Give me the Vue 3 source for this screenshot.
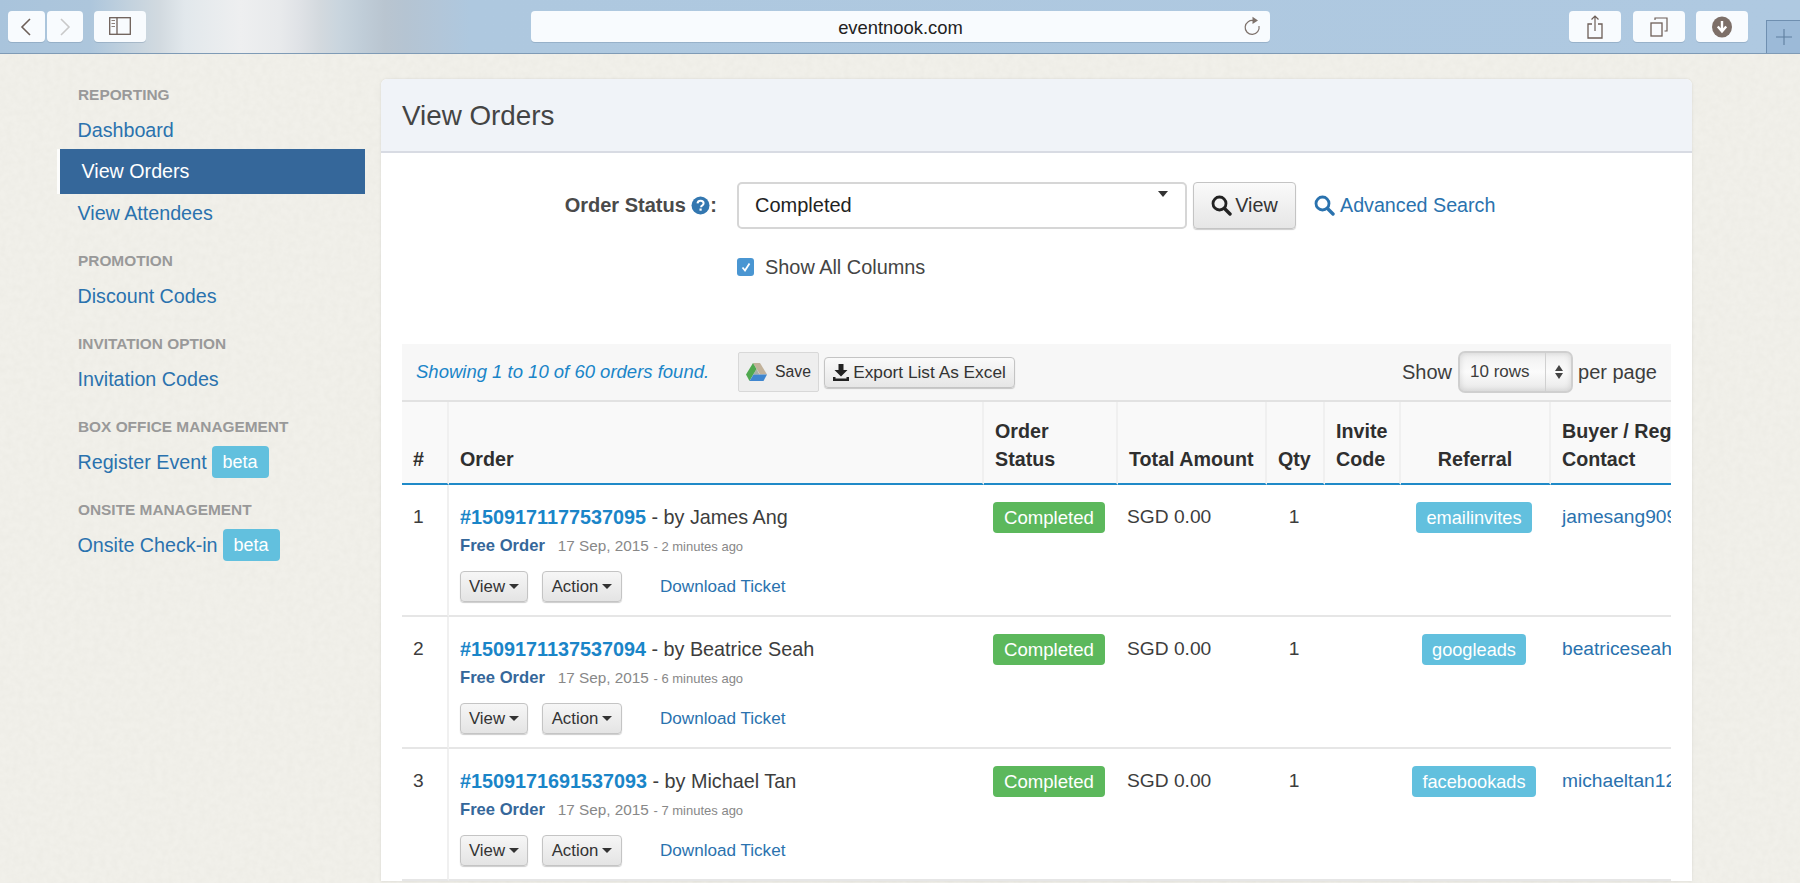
<script setup>
const groups = [
  { title: 'REPORTING', links: [{ label: 'Dashboard' }, { label: 'View Orders', active: true }, { label: 'View Attendees' }] },
  { title: 'PROMOTION', links: [{ label: 'Discount Codes' }] },
  { title: 'INVITATION OPTION', links: [{ label: 'Invitation Codes' }] },
  { title: 'BOX OFFICE MANAGEMENT', links: [{ label: 'Register Event', beta: true }] },
  { title: 'ONSITE MANAGEMENT', links: [{ label: 'Onsite Check-in', beta: true }] },
]
const orders = [
  { n: 1, id: '#1509171177537095', by: 'James Ang', ago: '2 minutes ago', ref: 'emailinvites', mail: 'jamesang909@gmail.com' },
  { n: 2, id: '#1509171137537094', by: 'Beatrice Seah', ago: '6 minutes ago', ref: 'googleads', mail: 'beatriceseah@gmail.com' },
  { n: 3, id: '#1509171691537093', by: 'Michael Tan', ago: '7 minutes ago', ref: 'facebookads', mail: 'michaeltan12@gmail.com' },
]
</script>

<template>
  <div class="page">
    <header class="chrome">
      <div class="nav-pair">
        <button class="tb tb-nav"><svg width="16" height="22" viewBox="0 0 16 22"><path d="M12 3 4 11l8 8" fill="none" stroke="#6d5f58" stroke-width="1.6"/></svg></button>
        <button class="tb tb-nav"><svg width="16" height="22" viewBox="0 0 16 22"><path d="M4 3l8 8-8 8" fill="none" stroke="#c9c9c9" stroke-width="1.6"/></svg></button>
      </div>
      <button class="tb tb-side"><svg width="22" height="19" viewBox="0 0 22 19"><rect x=".7" y=".7" width="20.6" height="16.6" fill="none" stroke="#6d5f58" stroke-width="1.3"/><path d="M8 .7v16.6" stroke="#6d5f58" stroke-width="1.3"/><path d="M2.500 3.500h3.500M2.500 6.500h3.500M2.500 9.500h3.500" stroke="#8d817b" stroke-width="1"/></svg></button>
      <div class="url">
        <span>eventnook.com</span>
        <svg class="reload" width="18" height="20" viewBox="0 0 18 20"><path d="M11 4.700A7 7 0 1 0 16 10" fill="none" stroke="#7d716b" stroke-width="1.200"/><path d="M9.500 .8 15 4.600 9.500 8z" fill="#7d716b"/></svg>
      </div>
      <div class="right-tools">
        <button class="tb tb-tool"><svg width="18" height="26" viewBox="0 0 18 26"><path d="M6 10H2v14h14V10h-4" fill="none" stroke="#6d5f58" stroke-width="1.300"/><path d="M9 2v15M5.500 5.500 9 2l3.500 3.500" fill="none" stroke="#6d5f58" stroke-width="1.200"/></svg></button>
        <button class="tb tb-tool"><svg width="18" height="20" viewBox="0 0 18 20"><rect x="1" y="6" width="11" height="13" fill="none" stroke="#6d5f58" stroke-width="1.300"/><path d="M5 3V1h12v13h-2.500" fill="none" stroke="#6d5f58" stroke-width="1.200"/></svg></button>
        <button class="tb tb-tool"><svg width="20" height="22" viewBox="0 0 20 22"><ellipse cx="10" cy="11" rx="10" ry="10.500" fill="#7d6f68"/><path d="M10 5v10M5.800 10.500 10 15.500l4.200-5" fill="none" stroke="#fff" stroke-width="2.400"/></svg></button>
      </div>
      <div class="newtab"><svg width="18" height="18" viewBox="0 0 18 18"><path d="M9 1v16M1 9h16" stroke="#5f7f9f" stroke-width="1.100"/></svg></div>
    </header>

    <div class="main">
      <svg class="paper" width="1800" height="829" aria-hidden="true">
        <filter id="paper-noise" x="0" y="0" width="100%" height="100%">
          <feTurbulence type="fractalNoise" baseFrequency="0.16" numOctaves="3" seed="4"/>
          <feColorMatrix type="matrix" values="0 0 0 0 0.55  0 0 0 0 0.54  0 0 0 0 0.48  0 0 0 0.14 -0.04"/>
        </filter>
        <rect width="1800" height="829" filter="url(#paper-noise)"/>
      </svg>
      <aside class="sidebar">
        <section v-for="g in groups" :key="g.title" class="group">
          <h4>{{ g.title }}</h4>
          <a v-for="l in g.links" :key="l.label" class="side-link" :class="{ active: l.active }">
            {{ l.label }}<span v-if="l.beta" class="beta">beta</span>
          </a>
        </section>
      </aside>

      <main class="panel">
        <div class="panel-head">View Orders</div>
        <div class="panel-body">
          <div class="filter">
            <label class="flabel">Order Status
              <svg class="help" width="19" height="19" viewBox="0 0 19 19"><circle cx="9.500" cy="9.500" r="9" fill="#3377b0"/><path d="M6.500 7.300c.2-1.800 1.500-2.600 3.100-2.600 1.700 0 3 1 3 2.500 0 1.300-.8 1.800-1.600 2.400-.6.400-.9.800-.9 1.600" fill="none" stroke="#fff" stroke-width="2"/><rect x="8.500" y="12.500" width="2.200" height="2.200" fill="#fff"/></svg>:
            </label>
            <div class="selectbox">Completed<i class="sel-caret"></i></div>
            <button class="btn view-btn"><svg width="21" height="21" viewBox="0 0 21 21"><circle cx="8.500" cy="8.500" r="6.500" fill="none" stroke="#222" stroke-width="2.800"/><path d="m13.500 13.500 5.500 5.500" stroke="#222" stroke-width="3.400" stroke-linecap="round"/></svg>View</button>
            <a class="adv"><svg width="21" height="21" viewBox="0 0 21 21"><circle cx="8.500" cy="8.500" r="6.500" fill="none" stroke="#2a72ae" stroke-width="2.800"/><path d="m13.500 13.500 5.500 5.500" stroke="#2a72ae" stroke-width="3.400" stroke-linecap="round"/></svg>Advanced Search</a>
          </div>
          <div class="check-row">
            <span class="check"><svg width="12" height="12" viewBox="0 0 12 12"><path d="M2.500 6.500 5 9.500l4.500-7" fill="none" stroke="#fff" stroke-width="1.800"/></svg></span>
            Show All Columns
          </div>

          <div class="listbar">
            <em class="found">Showing 1 to 10 of 60 orders found.</em>
            <button class="save">
              <svg width="21" height="19" viewBox="0 0 21 19"><path d="M7 0h7l7 11.500h-7z" fill="#c2b29a"/><path d="M7 0 0 11.500 3.500 18 10.500 6z" fill="#4fa84f"/><path d="M3.500 18h14l3.500-6.500H7.500z" fill="#3f86cf"/><path d="M10.500 6 7.500 11.500h6z" fill="#5f6f5f" opacity=".5"/></svg>
              Save
            </button>
            <button class="btn export">
              <svg width="16" height="17" viewBox="0 0 16 17"><path d="M5.500 0h5v6h4L8 12.500 1.500 6h4z" fill="#222"/><path d="M0 13h2.500v1.500h11V13H16v4H0z" fill="#222"/></svg>
              Export List As Excel
            </button>
            <div class="perpage">
              Show
              <div class="rows"><span class="rows-val">10 rows</span><span class="rows-arrow"><i class="up"></i><i class="down"></i></span></div>
              per page
            </div>
          </div>

          <div class="table-clip">
            <table>
              <colgroup>
                <col class="w-n"><col class="w-order"><col class="w-status"><col class="w-total"><col class="w-qty"><col class="w-inv"><col class="w-ref"><col class="w-buyer">
              </colgroup>
              <thead>
                <tr>
                  <th>#</th><th>Order</th><th>Order<br>Status</th><th>Total Amount</th><th>Qty</th><th>Invite<br>Code</th><th class="c">Referral</th><th>Buyer / Registrant<br>Contact</th>
                </tr>
              </thead>
              <tbody>
                <tr v-for="o in orders" :key="o.n">
                  <td class="bar-cell">{{ o.n }}</td>
                  <td>
                    <div class="oline"><a class="oid">{{ o.id }}</a> - by {{ o.by }}</div>
                    <div class="meta"><b>Free Order</b><span class="date">17 Sep, 2015</span><small> - {{ o.ago }}</small></div>
                    <div class="acts">
                      <button class="btn mini">View<i class="caret"></i></button>
                      <button class="btn mini">Action<i class="caret"></i></button>
                      <a class="dl">Download Ticket</a>
                    </div>
                  </td>
                  <td class="status-cell"><span class="badge green">Completed</span></td>
                  <td class="amount">SGD 0.00</td>
                  <td class="c qty">1</td>
                  <td></td>
                  <td class="c refcell"><span class="badge blue">{{ o.ref }}</span></td>
                  <td class="mail"><a>{{ o.mail }}</a></td>
                </tr>
              </tbody>
            </table>
          </div>
        </div>
      </main>
    </div>
  </div>
</template>

<style>
html, body { margin: 0; padding: 0; overflow: hidden; }
</style>

<style scoped>
.page { width: 1800px; height: 883px; overflow: hidden; background: #f1f0ea; font-family: "Liberation Sans", Arial, sans-serif; color: #3d3d3d; font-size: 19.200px; }
button { font-family: inherit; padding: 0; margin: 0; }
.chrome { position: relative; height: 53px; box-sizing: content-box; border-bottom: 1px solid #7f9bb6; display: flex; align-items: flex-start;
  background: linear-gradient(90deg, #a9c4dc 0, #adc6dc 90px, #c3d2de 130px, #d2dae0 160px, #e2e8ec 185px, #eeeff0 240px, #e8eaec 280px, #dfe2e6 300px, #d3d9de 320px, #c9d5de 340px, #c0cdd8 362px, #b9c5d0 385px, #b5c4d2 405px, #b2c6d9 440px, #aec8df 470px, #afc9e1 100%); }
.nav-pair { display: flex; gap: 2px; margin: 11px 0 0 8px; }
.tb { height: 31px; border: 0; border-radius: 4px; background: #f8fbfe; display: flex; align-items: center; justify-content: center; box-shadow: 0 1px 0 rgba(110,135,160,.35); }
.tb-nav { width: 36.500px; }
.tb-side { width: 52px; margin: 11px 0 0 11px; }
.url { position: absolute; left: 531px; top: 11px; width: 739px; height: 31px; padding-top: 2px; box-sizing: border-box; border-radius: 4px; background: #f8fbfe; box-shadow: 0 1px 0 rgba(110,135,160,.35); display: flex; align-items: center; justify-content: center; font-size: 18.400px; color: #222; }
.reload { position: absolute; right: 9px; top: 5px; }
.right-tools { position: absolute; left: 1569px; top: 11px; display: flex; gap: 11.500px; }
.tb-tool { width: 52px; }
.newtab { position: absolute; left: 1766px; top: 20px; width: 34px; height: 33px; box-sizing: border-box; background: #9cbad8; border: 1px solid #6f8fb0; border-right: 0; border-bottom: 0; display: flex; align-items: center; justify-content: center; }

.main { position: relative; display: flex; align-items: flex-start; }
.paper { position: absolute; left: 0; top: 0; }
.sidebar { position: relative; width: 305px; margin-left: 60px; padding-top: 31px; flex: none; }
.group { margin-bottom: 18.500px; }
.group h4 { margin: 0 0 6px 18px; font-size: 15.400px; line-height: 20px; font-weight: 700; color: #999; white-space: nowrap; }
.side-link { display: flex; align-items: center; height: 38.500px; padding-left: 17.500px; color: #2a72ae; font-size: 19.700px; }
.group:first-child .side-link:first-of-type { height: 38px; }
.side-link.active { height: 45px; background: #35679a; color: #fff; padding-left: 21.500px; box-shadow: -3px 0 0 rgba(255,255,255,.85); }
.beta { margin-left: 5px; width: 57px; height: 32px; border-radius: 4px; background: #62c0de; color: #fff; font-size: 18px; display: flex; align-items: center; justify-content: center; }

.panel { position: relative; width: 1311px; margin: 25px 0 0 16px; background: #fff; border-radius: 6px 6px 0 0; box-shadow: 0 0 3px rgba(0,0,0,.1); flex: none; }
.panel-head { height: 72px; background: #f0f3f8; border-bottom: 2px solid #d8dbe3; border-radius: 6px 6px 0 0; padding-left: 21px; font-size: 27.800px; line-height: 74px; color: #444; }
.panel-body { padding: 29px 21px 0; }
.filter { display: flex; align-items: center; height: 47px; }
.flabel { width: 335px; flex: none; box-sizing: border-box; padding-right: 20px; text-align: right; font-weight: 700; color: #4a4a4a; font-size: 20px; white-space: nowrap; }
.help { vertical-align: -3px; }
.selectbox { position: relative; width: 450px; height: 47px; flex: none; box-sizing: border-box; border: 2px solid #d6d6d6; border-radius: 5px; background: #fff; padding-left: 16px; line-height: 43px; font-size: 20px; color: #222; }
.sel-caret { position: absolute; right: 17px; top: 7px; border: 5.500px solid transparent; border-top: 6px solid #333; border-bottom: 0; }
.btn { border: 1px solid #c4c4c4; border-radius: 4px; background: linear-gradient(#fafafa, #e6e6e6); box-shadow: 0 1px 1px rgba(0,0,0,.2); color: #333; display: inline-flex; align-items: center; justify-content: center; }
.view-btn { width: 103px; height: 47px; margin-left: 6px; font-size: 19.800px; gap: 3px; }
.adv { margin-left: 18px; display: inline-flex; align-items: center; gap: 5px; color: #2a72ae; font-size: 19.700px; }
.check-row { display: flex; align-items: center; margin: 29px 0 0 335px; height: 18px; font-size: 19.900px; color: #444; }
.check { width: 17px; height: 18px; border-radius: 3px; background: #4a96d2; margin-right: 11px; display: flex; align-items: center; justify-content: center; }
.listbar { display: flex; align-items: center; margin-top: 68px; height: 56px; background: #f7f7f7; border-bottom: 2px solid #e2e2e2; padding-left: 14px; box-sizing: content-box; }
.found { width: 322px; flex: none; color: #1a85c8; font-size: 18.500px; white-space: nowrap; }
.save { width: 81px; height: 40px; flex: none; border: 1px solid #d8d8d8; border-radius: 2px; background: #eeeeee; font-size: 15.800px; color: #333; display: inline-flex; align-items: center; justify-content: center; gap: 8px; }
.export { width: 191px; height: 31px; margin-left: 5px; flex: none; font-size: 17.300px; gap: 4px; }
.perpage { margin-left: auto; padding-right: 14px; display: flex; align-items: center; gap: 6px; font-size: 20px; }
.rows { width: 115px; height: 42px; margin-right: -1px; box-sizing: border-box; border: 2px solid #cfcfcf; border-radius: 7px; background: linear-gradient(#efefef, #fbfbfb 50%, #e8e8e8); display: flex; align-items: center; box-shadow: inset 0 0 6px rgba(0,0,0,.12); }
.rows-val { flex: 1; padding-left: 10px; font-size: 17px; }
.rows-arrow { width: 25px; height: 100%; border-left: 1px solid #d0d0d0; display: flex; flex-direction: column; align-items: center; justify-content: center; gap: 2px; }
.up { border: 4px solid transparent; border-bottom: 6px solid #444; border-top: 0; }
.down { border: 4px solid transparent; border-top: 6px solid #444; border-bottom: 0; }

.table-clip { width: 1269px; overflow: hidden; }
table { border-collapse: separate; border-spacing: 0; table-layout: fixed; width: 1409px; }
.w-n { width: 47px; } .w-order { width: 535px; } .w-status { width: 134px; } .w-total { width: 149px; } .w-qty { width: 58px; } .w-inv { width: 76px; } .w-ref { width: 150px; } .w-buyer { width: 260px; }
th { background: #f9f9f9; border-bottom: 2px solid #1f8ac8; border-right: 2px solid #f0f0f0; box-sizing: border-box; height: 83px; vertical-align: bottom; text-align: left; font-size: 19.700px; line-height: 28px; padding: 0 0 10px 11px; color: #2f2f2f; white-space: nowrap; }
th.c { text-align: center; padding-left: 0; }
td { height: 132px; box-sizing: border-box; vertical-align: top; border-bottom: 2px solid #e6e6e6; padding: 17.500px 0 0 11px; font-size: 19.200px; line-height: 28px; color: #3d3d3d; white-space: nowrap; overflow: hidden; }
td.c { text-align: center; padding-left: 0; }
.bar-cell { border-right: 2px solid #f0f0f0; }
.oline { font-size: 19.800px; }
.oid { color: #1a85c8; font-weight: 700; }
.meta { margin-top: 0; line-height: 28px; }
.meta b { color: #35679a; font-size: 16.600px; }
.date { margin-left: 13px; color: #888; font-size: 15.300px; }
.meta small { color: #888; font-size: 13px; margin-left: 1px; }
.acts { display: flex; align-items: center; margin-top: 10.500px; }
.mini { width: 68px; height: 31px; font-size: 16.800px; gap: 4px; margin-right: 14px; background: linear-gradient(#f6f6f6, #e4e4e4); }
.mini + .mini { width: 80px; margin-right: 38px; }
.caret { border: 5px solid transparent; border-top: 5.500px solid #333; border-bottom: 0; }
.dl { color: #2a72ae; font-size: 17.100px; }
.status-cell { padding-left: 9px; }
.amount { padding-left: 9px; }
td.qty { padding-right: 4px; }
td.refcell { padding-right: 4px; }
.badge { display: flex; width: fit-content; margin: -.5px 0 0; align-items: center; justify-content: center; height: 31px; padding: 0 10.500px; border-radius: 4px; color: #fff; font-size: 18.200px; }
.c .badge { margin: -.5px auto 0; }
.green { background: #5cb85c; font-size: 18.600px; padding: 0 11px; }
.blue { background: #62c0de; }
.mail a { color: #2a72ae; }
</style>
